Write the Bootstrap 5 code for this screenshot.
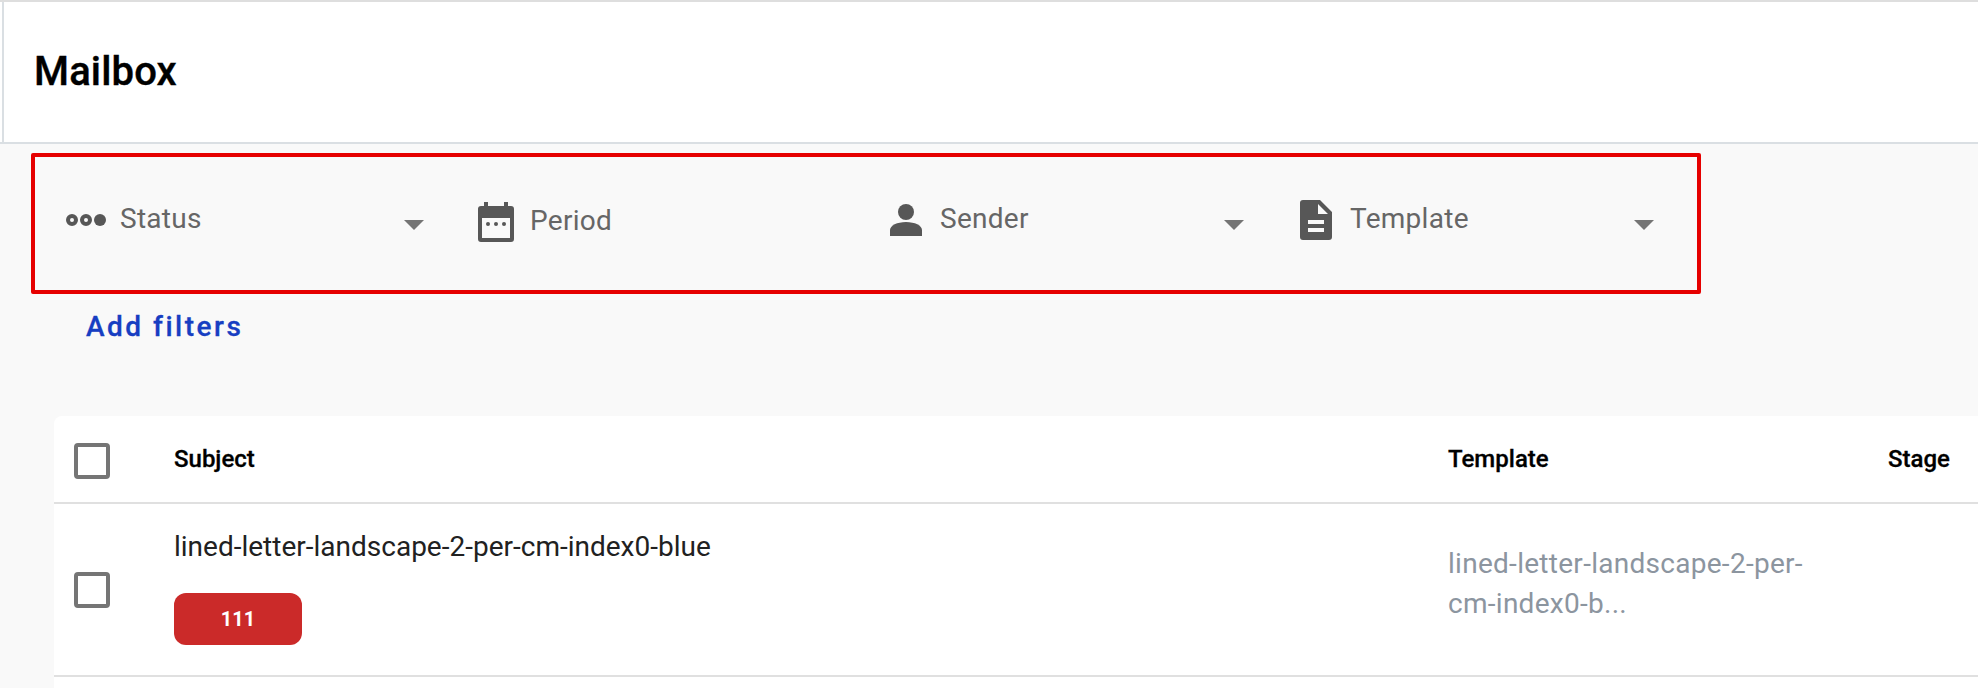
<!DOCTYPE html>
<html lang="en">
<head>
<meta charset="utf-8">
<meta name="viewport" content="width=device-width, initial-scale=1">
<title>Mailbox</title>
<link href="https://cdn.jsdelivr.net/npm/bootstrap@5.3.0/dist/css/bootstrap.min.css" rel="stylesheet">
<style>
  body { font-family: Roboto, "Liberation Sans", sans-serif; font-size: 28px; line-height: 40px; background: #f9f9f9; color: #212121; height: 688px; overflow: hidden; }
  .app-header { height: 144px; border-top: 2px solid #dedede; border-bottom: 2px solid #dadfe3; }
  .app-header-inner { border-left: 2px solid #dadfe3; margin-left: 2px; padding-left: 30px; }
  .app-title { font-size: 40px; line-height: 48px; font-weight: 500; color: #000; letter-spacing: .15px; margin-top: -1px; -webkit-text-stroke: .4px #000; }
  .filter-bar { margin: 9px 0 0 31px; width: 1670px; height: 141px; border: 4px solid #e60000; border-radius: 2px; padding: 39px 0 0 27px; gap: 34px; }
  .filter-item { width: 376px; height: 52px; color: #666; }
  .filter-item svg { width: 48px; height: 48px; flex: none; fill: #575757; }
  .filter-item .caret { fill: #757575; margin-top: 4px; }
  .filter-label { margin: 3px 0 0 10px; letter-spacing: .28px; }
  .filter-date { padding-top: 2px; }
  .add-filters { margin: 13px 0 0 86px; color: #173ec2; font-weight: 500; font-size: 28px; letter-spacing: 2.5px; line-height: 40px; -webkit-text-stroke: .3px #173ec2; }
  .mail-card { margin: 69px 0 0 54px; border-top-left-radius: 8px; height: 272px; }
  .mail-row { display: grid; grid-template-columns: 120px 1274px 440px 1fr; border-bottom: 2px solid #e0e0e0; }
  .mail-head { height: 88px; font-size: 24px; font-weight: 500; color: #000; line-height: 36px; padding-top: 25px; -webkit-text-stroke: .3px #000; }
  .mail-item { height: 173px; }
  .mail-check { appearance: none; display: block; width: 36px; height: 36px; border: 4px solid #757575; border-radius: 4px; margin: 2px 0 0 20px; background: #fff; }
  .mail-item .mail-check { margin-top: 68px; }
  .mail-subject { margin-top: 23px; }
  .mail-tag { width: 128px; height: 52px; margin-top: 26px; border-radius: 12px; background: #cb2a29; color: #fff; font-size: 20px; font-weight: 700; letter-spacing: 0; line-height: 52px; }
  .mail-template { color: #8c959f; margin-top: 40px; width: 376px; letter-spacing: .28px; }
</style>
</head>
<body>
<header class="app-header bg-white d-flex">
  <div class="app-header-inner d-flex align-items-center flex-grow-1">
    <h1 class="app-title mb-0">Mailbox</h1>
  </div>
</header>
<main>
  <section class="filter-bar d-flex align-items-start">
    <div class="filter-item d-flex align-items-start">
      <svg viewBox="0 0 24 24"><path fill-rule="evenodd" d="M5 9a3 3 0 1 0 0 6a3 3 0 0 0 0-6zm0 2a1 1 0 1 1 0 2a1 1 0 0 1 0-2zM12 9a3 3 0 1 0 0 6a3 3 0 0 0 0-6zm0 2a1 1 0 1 1 0 2a1 1 0 0 1 0-2z"/><circle cx="19" cy="12" r="3"/></svg>
      <span class="filter-label">Status</span>
      <svg class="caret ms-auto" viewBox="0 0 24 24"><path d="M7 10l5 5 5-5z"/></svg>
    </div>
    <div class="filter-item filter-date d-flex align-items-start">
      <svg viewBox="0 0 24 24"><path fill-rule="evenodd" d="M6 2h2v2h8V2h2v2h1.5A1.5 1.5 0 0 1 21 5.500v15a1.500 1.500 0 0 1-1.500 1.500h-15A1.500 1.500 0 0 1 3 20.500v-15A1.500 1.500 0 0 1 4.500 4H6zM5 10v10h14V10z"/><circle cx="8" cy="13" r="1"/><circle cx="12" cy="13" r="1"/><circle cx="16" cy="13" r="1"/></svg>
      <span class="filter-label">Period</span>
    </div>
    <div class="filter-item d-flex align-items-start">
      <svg viewBox="0 0 24 24"><circle cx="12" cy="8" r="4"/><path d="M12 13c4.420 0 8 1.790 8 4v3H4v-3c0-2.210 3.580-4 8-4z"/></svg>
      <span class="filter-label">Sender</span>
      <svg class="caret ms-auto" viewBox="0 0 24 24"><path d="M7 10l5 5 5-5z"/></svg>
    </div>
    <div class="filter-item d-flex align-items-start">
      <svg viewBox="0 0 24 24"><path fill-rule="evenodd" d="M5.500 2H14l6 6v12.500a1.500 1.500 0 0 1-1.500 1.500h-13A1.500 1.500 0 0 1 4 20.500v-17A1.500 1.500 0 0 1 5.500 2zM13 4v5h5zM8 12v2h8v-2zM8 16v2h8v-2z"/></svg>
      <span class="filter-label">Template</span>
      <svg class="caret ms-auto" viewBox="0 0 24 24"><path d="M7 10l5 5 5-5z"/></svg>
    </div>
  </section>
  <button type="button" class="btn p-0 border-0 rounded-0 d-block add-filters">Add filters</button>
  <section class="mail-card bg-white">
    <div class="mail-row mail-head">
      <div><input type="checkbox" class="mail-check" aria-label="Select all"></div>
      <div>Subject</div>
      <div>Template</div>
      <div>Stage</div>
    </div>
    <div class="mail-row mail-item">
      <div><input type="checkbox" class="mail-check" aria-label="Select letter"></div>
      <div>
        <div class="mail-subject">lined-letter-landscape-2-per-cm-index0-blue</div>
        <div class="mail-tag text-center">111</div>
      </div>
      <div class="mail-template">lined-letter-landscape-2-per-cm-index0-b...</div>
      <div></div>
    </div>
  </section>
</main>
<script src="https://cdn.jsdelivr.net/npm/bootstrap@5.3.0/dist/js/bootstrap.bundle.min.js"></script>
</body>
</html>
